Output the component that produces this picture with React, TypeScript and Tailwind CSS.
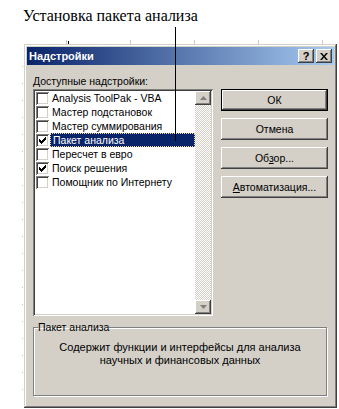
const items = [
  { label: "Analysis ToolPak - VBA", checked: false },
  { label: "Мастер подстановок", checked: false },
  { label: "Мастер суммирования", checked: false },
  { label: "Пакет анализа", checked: true, selected: true },
  { label: "Пересчет в евро", checked: false },
  { label: "Поиск решения", checked: true },
  { label: "Помощник по Интернету", checked: false },
];

const raised =
  "shadow-[inset_-1px_-1px_#404040,inset_1px_1px_#ffffff,inset_-2px_-2px_#808080,inset_2px_2px_#d4d0c8]";

function CheckBox({ checked }: { checked: boolean }) {
  return (
    <div className="w-[13px] h-[13px] shrink-0 bg-white flex items-center justify-center shadow-[inset_1px_1px_#808080,inset_-1px_-1px_#ffffff,inset_2px_2px_#404040,inset_-2px_-2px_#d4d0c8]">
      {checked && (
        <svg width="7" height="7" viewBox="0 0 7 7">
          <path d="M0 2h1v1h1v1h1v-1h1v-1h1v-1h1v-1h1v3h-1v1h-1v1h-1v1h-1v1h-1v-1h-1v-1h-1z" fill="#000" />
        </svg>
      )}
    </div>
  );
}

function Btn({ children, def }: { children: React.ReactNode; def?: boolean }) {
  return (
    <div className={`h-[22px] ${def ? "border border-black" : ""}`}>
      <div className={`h-full bg-[#d4d0c8] ${raised} flex items-center justify-center text-black`}>
        {children}
      </div>
    </div>
  );
}

function ScrollArrow({ up }: { up?: boolean }) {
  return (
    <div className={`h-[14px] w-[16px] bg-[#d4d0c8] ${raised} flex items-center justify-center`}>
      <svg width="7" height="4" viewBox="0 0 7 4">
        <path d={up ? "M3.5 0L7 4H0z" : "M0 0h7L3.5 4z"} fill="#808080" />
      </svg>
    </div>
  );
}

export default function App() {
  return (
    <div
      className="relative w-[339px] h-[409px] bg-white overflow-hidden"
      style={{ fontFamily: "'Liberation Sans', Arial, sans-serif" }}
    >
      {/* faint table ruler marks behind the dialog */}
      <div className="absolute left-[22px] top-[40px] w-[317px] h-[4px] bg-[image:repeating-linear-gradient(to_right,transparent_0_44px,#c8c8c8_44px_45px,transparent_45px_64px)]" />
      <div className="absolute left-[68px] top-[41px] w-[1px] h-[3px] bg-black" />
      <div className="absolute left-[22px] top-[50px] w-[1px] h-[350px] bg-[image:repeating-linear-gradient(to_bottom,transparent_0_16px,#c8c8c8_16px_17px)]" />

      <div className="h-[44px] pl-[23px] pt-[6px]">
        <p
          className="text-[16px] leading-[20px] text-black"
          style={{ fontFamily: "'Liberation Serif', 'Times New Roman', serif" }}
        >
          Установка пакета анализа
        </p>
      </div>

      {/* callout line */}
      <div className="absolute left-[175px] top-[27px] w-[1px] h-[114px] bg-black z-10" />

      <div className="ml-[24px] w-[313px] h-[364px] bg-[#d4d0c8] p-[3px] flex flex-col text-[10.5px] leading-[13px] shadow-[inset_-1px_-1px_#404040,inset_1px_1px_#d4d0c8,inset_-2px_-2px_#808080,inset_2px_2px_#ffffff]">
        {/* title bar */}
        <div className="h-[18px] flex items-center pl-[2px] pr-[2px] bg-[linear-gradient(to_right,#0a246a,#a6caf0)]">
          <span className="flex-1 text-white font-bold text-[11px]">Надстройки</span>
          <div className="flex gap-[2px]">
            <div className={`w-[16px] h-[14px] bg-[#d4d0c8] ${raised} flex items-center justify-center text-[11px] font-bold leading-none text-black`}>
              ?
            </div>
            <div className={`w-[16px] h-[14px] bg-[#d4d0c8] ${raised} flex items-center justify-center`}>
              <svg width="8" height="7" viewBox="0 0 8 7">
                <path d="M0 0h2l2 2.5L6 0h2L5 3.5 8 7H6L4 4.5 2 7H0l3-3.5z" fill="#000" />
              </svg>
            </div>
          </div>
        </div>

        <div className="flex-1 px-[6px] pt-[10px] flex flex-col">
          <div className="flex gap-[8px]">
            <div className="w-[180px] flex flex-col">
              <span className="text-black h-[13px]">Доступные надстройки:</span>
              <div className="mt-[1px] h-[227px] bg-white p-[2px] flex shadow-[inset_1px_1px_#808080,inset_-1px_-1px_#ffffff,inset_2px_2px_#404040,inset_-2px_-2px_#d4d0c8]">
                <div className="flex-1 flex flex-col">
                  {items.map((it) => (
                    <div key={it.label} className="h-[14px] flex items-center pl-[1px]">
                      <CheckBox checked={it.checked} />
                      <div
                        className={`ml-[1px] flex-1 h-[14px] flex items-center pl-[2px] ${
                          it.selected
                            ? "bg-[#0a246a] text-white border border-dotted border-[#f5db95]"
                            : "text-black"
                        }`}
                      >
                        {it.label}
                      </div>
                    </div>
                  ))}
                </div>
                <div className="w-[16px] flex flex-col bg-[image:repeating-conic-gradient(#d4d0c8_0%_25%,#ffffff_0%_50%)] bg-[length:2px_2px]">
                  <ScrollArrow up />
                  <div className="flex-1" />
                  <ScrollArrow />
                </div>
              </div>
            </div>
            <div className="w-[107px] mt-[14px] flex flex-col gap-[7px]">
              <Btn def>ОК</Btn>
              <Btn>Отмена</Btn>
              <Btn>
                <span>
                  Об<span className="underline">з</span>ор...
                </span>
              </Btn>
              <Btn>
                <span>
                  <span className="underline">А</span>втоматизация...
                </span>
              </Btn>
            </div>
          </div>

          <fieldset className="mt-[5px] h-[75px] border border-[#808080] shadow-[1px_1px_0_#ffffff,inset_1px_1px_0_#ffffff] mr-[1px] px-[2px]">
            <legend className="text-black px-0 ml-[2px]">Пакет анализа</legend>
            <p className="text-center text-black text-[11px] mt-[7px]">
              Содержит функции и интерфейсы для анализа
              <br />
              научных и финансовых данных
            </p>
          </fieldset>
        </div>
      </div>
    </div>
  );
}
